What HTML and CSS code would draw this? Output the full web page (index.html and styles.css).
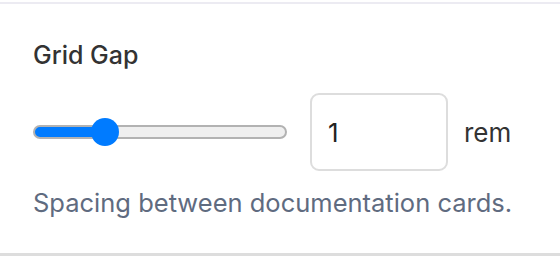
FILE: index.html
```html
<!DOCTYPE html>
<html lang="en">
<head>
    <meta charset="UTF-8">
    <meta name="viewport" content="width=device-width, initial-scale=1.0">
    <title>Grid Gap</title>
    <link rel="stylesheet" href="styles.css">
</head>
<body>

<div class="setting">
    <label class="setting-label" for="gridGap">Grid Gap</label>
    <div class="setting-row">
        <input type="range" class="slider" id="gridGap" min="0" max="4" step="0.25" value="1">
        <input type="text" class="value-box" id="gridGapValue" value="1">
        <span class="unit">rem</span>
    </div>
    <p class="hint">Spacing between documentation cards.</p>
</div>

</body>
</html>
```

FILE: styles.css
```css
body {
    font-family: 'Inter', 'Liberation Sans', Arial, sans-serif;
    background-color: #fff;
    margin: 0;
    padding: 2px 0 0;
}

.setting {
    border-top: 2px solid #ecebf2;
    border-bottom: 3px solid #dddddd;
    height: 254px;
    box-sizing: border-box;
    padding: 36px 33px 0;
}

.setting-label {
    display: block;
    font-size: 25px;
    font-weight: 500;
    color: #333;
    line-height: 30px;
}

.setting-row {
    display: flex;
    align-items: center;
    margin-top: 23px;
}

.slider {
    -webkit-appearance: none;
    appearance: none;
    width: 254px;
    height: 28px;
    margin: 0;
    background: transparent;
}

.slider::-webkit-slider-runnable-track {
    height: 14px;
    border-radius: 7px;
    border: 2px solid #b2b2b2;
    box-sizing: border-box;
    background: linear-gradient(to right, #007bff 0, #007bff 28%, #efefef 28%);
}

.slider::-webkit-slider-thumb {
    -webkit-appearance: none;
    width: 28px;
    height: 28px;
    margin-top: -9px;
    border-radius: 50%;
    background: #007bff;
    border: none;
}

.value-box {
    width: 138px;
    height: 78px;
    box-sizing: border-box;
    margin-left: 23px;
    padding: 0 16px;
    border: 2px solid #dddddd;
    border-radius: 9px;
    font-family: inherit;
    font-size: 26px;
    color: #222;
}

.unit {
    margin-left: 16px;
    font-size: 26px;
    color: #333;
}

.hint {
    margin: 16px 0 0;
    font-size: 25.5px;
    line-height: 32px;
    color: #5f6b80;
}
```
